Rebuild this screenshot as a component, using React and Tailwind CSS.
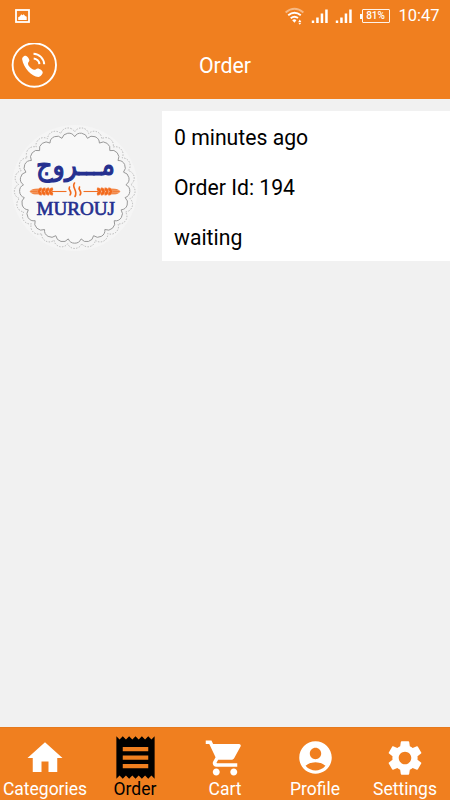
import React, { useState } from 'react';
import { MdHome, MdReceipt, MdShoppingCart, MdAccountCircle, MdSettings } from 'react-icons/md';

const tabs = [
  { name: 'Categories', icon: MdHome, size: 42 },
  { name: 'Order', icon: MdReceipt, size: 51 },
  { name: 'Cart', icon: MdShoppingCart, size: 42 },
  { name: 'Profile', icon: MdAccountCircle, size: 39 },
  { name: 'Settings', icon: MdSettings, size: 42 },
];

// closed ring of outward bumps, one cusp at the top
const scallop = (cx, cy, r, count) => {
  const bump = (Math.PI * r) / count;
  let d = '';
  for (let i = 0; i <= count; i++) {
    const a = (i / count) * Math.PI * 2 - Math.PI / 2;
    const x = (cx + r * Math.cos(a)).toFixed(2);
    const y = (cy + r * Math.sin(a)).toFixed(2);
    d += i === 0 ? `M${x} ${y}` : `A${bump * 1.08} ${bump * 1.08} 0 0 1 ${x} ${y}`;
  }
  return d;
};

function Signal() {
  return (
    <svg className="ml-[7px]" width="17" height="14" viewBox="0 0 17 14" fill="#fff">
      <path d="M.8 11.500h2.400V14H.8zM5.200 8.500h2.500V14H5.200zM9.700 4.500h2.500V14H9.700zM14.200 .5h2.500V14h-2.500z" />
    </svg>
  );
}

function StatusBar() {
  return (
    <div className="flex h-8 items-center pl-[15px] pr-[9.5px]">
      <svg width="15" height="14" viewBox="0 0 15 14">
        <rect x="1" y="1" width="13" height="12" fill="none" stroke="#fff" strokeWidth="1.8" />
        <path d="M3.2 11V8.2l1.8-.9 1.2-2 1.2 1 1.2-1 1.6 1.7 1.5.7V11z" fill="#fff" />
      </svg>
      <div className="ml-auto flex items-center">
        <svg width="19" height="18" viewBox="0 0 19 18" fill="none" stroke="#fff" strokeWidth="1.9">
          <path d="M.6 5.4Q9.5-2 18.4 5.4" opacity=".45" />
          <path d="M3.2 8.3Q9.5 3.2 15.8 8.3" />
          <path d="M5.7 11.2Q9.5 8.3 13 11" />
          <path d="M7.2 13.2Q9.5 11.5 11.4 13.2L9.5 15.8z" fill="#fff" stroke="none" />
          <path d="M13.3 15l1.5-2.4 1.5 2.4zM13.3 15.8h3l-1.5 2z" fill="#fff" stroke="none" />
        </svg>
        <Signal />
        <Signal />
        <div className="ml-[8.5px] h-[5px] w-[1.5px] bg-white" />
        <div className="flex h-[14px] w-[28px] items-center justify-center rounded-[1px] border border-white/90 text-[10px] font-medium leading-none text-white">
          81%
        </div>
        <span className="ml-[9px] w-[42px] text-[16.5px] leading-8 text-white">10:47</span>
      </div>
    </div>
  );
}

function PhoneButton() {
  return (
    <button className="h-[46px] w-[46px]">
      <svg width="46" height="46" viewBox="0 0.5 46 46" fill="none" stroke="#fff">
        <circle cx="23.3" cy="22.5" r="21.7" strokeWidth="1.9" />
        <path
          d="M11.200 17c-.5-1.900 2-4.200 3.600-3.800 1.700.5 3.700 3 3.600 4.900-.1 1.300-1.500 1.800-1.400 3.100.2 2.400 3.700 5.600 6.100 6.100 1.400.3 2.200-1.400 3.800-1.300 1.700.1 4.600 2 4.800 3.700.2 1.800-2.500 4.700-4.300 4.700C20.800 34.500 12.300 25 11.200 17z"
          fill="#fff"
          stroke="none"
        />
        <path d="M22.500 11.200A11.200 11.200 0 0 1 33.200 21.700M22.700 16A6.300 6.300 0 0 1 28.400 21.700" strokeWidth="2" />
      </svg>
    </button>
  );
}

function Wheat({ transform }) {
  return (
    <g transform={transform}>
      <path d="M37 0H22" stroke="#f07025" strokeWidth="1.1" />
      <path d="M0 0C2-2.700 5-3.200 9-3V3C5 3.200 2 2.700 0 0z" fill="#f4a06b" />
      <path d="M1 0H9M3-1.700H9M3 1.700H9" stroke="#f07025" strokeWidth=".7" />
      {[8, 11.7, 15.4, 19.1].map((x) => (
        <path
          key={x}
          d={`M${x} 0Q${x + 0.3}-4 ${x + 4}-4Q${x + 5.5}-1.500 ${x + 3} 0Q${x + 5.5} 1.500 ${x + 4} 4Q${x + 0.3} 4 ${x} 0z`}
          fill="#f26a1c"
          stroke="#f9d0b5"
          strokeWidth=".25"
        />
      ))}
    </g>
  );
}

function MuroujLogo() {
  return (
    <svg width="162" height="150" viewBox="0 111 162 150">
      <circle cx="74.7" cy="188" r="63" fill="#f5f5f5" />
      <path d={scallop(74.7, 188, 56.2, 25)} fill="none" stroke="#b8b8b8" strokeWidth="1" strokeDasharray="1.4 1.4" />
      <path d={scallop(74.7, 188, 51.3, 25)} fill="#f8f8f8" stroke="#999" strokeWidth="1" />
      <text
        transform="translate(75.5 174.500) scale(1 1.05)"
        textAnchor="middle"
        textLength="79"
        lengthAdjust="spacingAndGlyphs"
        className="font-['DejaVu_Sans',sans-serif] text-[28px]"
        fill="#25308f"
        stroke="#25308f"
        strokeWidth="1.1"
      >
        مـــروج
      </text>
      <Wheat transform="translate(29.5 191.5)" />
      <Wheat transform="translate(120.5 191.5) scale(-1 1)" />
      <g fill="none" stroke="#f26a1c" strokeWidth="1.6" strokeLinecap="round">
        <path d="M69.500 187c-2 3 3.500 4.500 .5 8" />
        <path d="M74.500 183c-3.500 4.500 4 7.500 .5 13.500" />
        <path d="M79.500 187c-2 3 3.500 4.500 .5 8" />
      </g>
      <text
        x="36.5"
        y="214.5"
        textLength="78.5"
        lengthAdjust="spacingAndGlyphs"
        className="font-['Liberation_Serif',serif] text-[19.5px]"
        fill="#25308f"
        stroke="#25308f"
        strokeWidth=".7"
      >
        MUROUJ
      </text>
    </svg>
  );
}

function App() {
  const [active, setActive] = useState('Order');

  return (
    <div className="flex h-screen w-full flex-col overflow-hidden bg-[#f1f1f1] font-[Roboto,sans-serif]">
      <header className="h-[98.5px] shrink-0 bg-[#f07f1f]">
        <StatusBar />
        <div className="grid h-[67px] grid-cols-[1fr_auto_1fr] items-center px-[11px]">
          <PhoneButton />
          <h1 className="text-[21.3px] text-white">Order</h1>
        </div>
      </header>

      <main className="flex-1 pt-3">
        <div className="flex h-[150px]">
          <MuroujLogo />
          <div className="flex-1 bg-white pl-3 pt-[2px] text-[21.2px] leading-[50px] text-black">
            <p>0 minutes ago</p>
            <p>Order Id: 194</p>
            <p>waiting</p>
          </div>
        </div>
      </main>

      <nav className="grid h-[73px] shrink-0 grid-cols-5 border-t border-[#e67a1e] bg-[#f07f1f]">
        {tabs.map(({ name, icon: Icon, size }) => (
          <button
            key={name}
            onClick={() => setActive(name)}
            className={`flex flex-col items-center ${active === name ? 'text-black' : 'text-white'}`}
          >
            <span className="flex h-[50px] items-center justify-center pt-[9px]">
              <Icon size={size} className="shrink-0" />
            </span>
            <span className="text-[17.5px] leading-[22px]">{name}</span>
          </button>
        ))}
      </nav>
    </div>
  );
}

export default App;
